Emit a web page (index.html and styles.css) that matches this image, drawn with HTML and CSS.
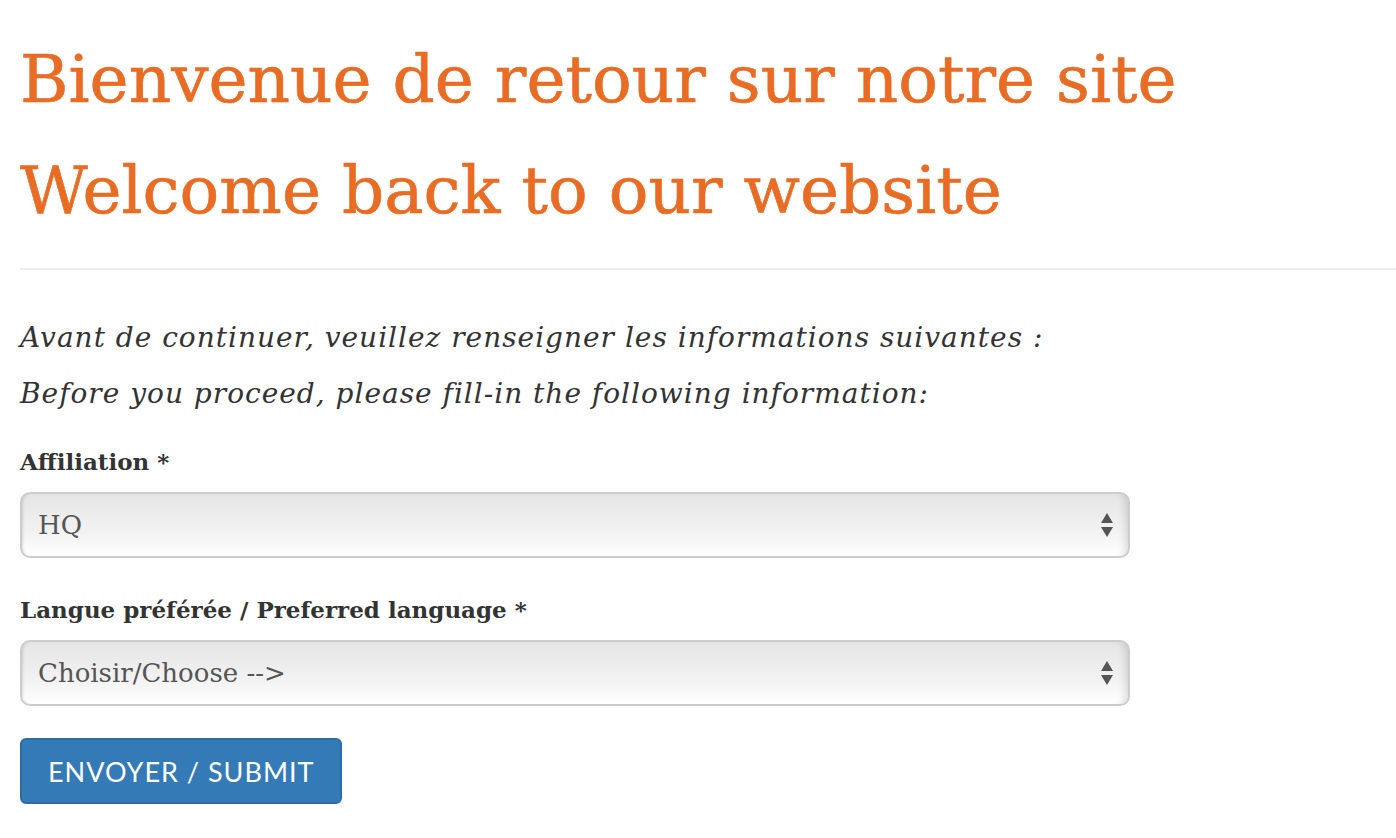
FILE: index.html
```html
<!DOCTYPE html>
<html lang="fr">
<head>
<meta charset="utf-8">
<title>Bienvenue</title>
<link rel="stylesheet" href="styles.css">
</head>
<body>
<div class="page">
  <h1 class="title"><span class="title-line">Bienvenue de retour sur notre site</span><span class="title-line">Welcome back to our website</span></h1>
  <hr class="rule">
  <form class="form">
    <div class="intro-block">
      <p class="intro">Avant de continuer, veuillez renseigner les informations suivantes :</p>
      <p class="intro">Before you proceed, please fill-in the following information:</p>
    </div>
    <div class="field">
      <label class="label">Affiliation *</label>
      <div class="select">
        <span class="select-value">HQ</span>
        <svg class="arrows" width="14" height="26" viewBox="0 0 14 26"><path d="M7 1 L13 11 L1 11 Z" fill="#555"/><path d="M1 15 L13 15 L7 25 Z" fill="#555"/></svg>
      </div>
    </div>
    <div class="field">
      <label class="label">Langue préférée / Preferred language *</label>
      <div class="select">
        <span class="select-value">Choisir/Choose --&gt;</span>
        <svg class="arrows" width="14" height="26" viewBox="0 0 14 26"><path d="M7 1 L13 11 L1 11 Z" fill="#555"/><path d="M1 15 L13 15 L7 25 Z" fill="#555"/></svg>
      </div>
    </div>
    <button class="submit" type="button">ENVOYER / SUBMIT</button>
  </form>
</div>
</body>
</html>
```

FILE: styles.css
```css
html, body {
  margin: 0;
  padding: 0;
  background: #fff;
}
body {
  font-family: "DejaVu Serif", "Liberation Serif", serif;
  color: #333;
}
.page {
  padding: 0 0 0 20px;
}
.title {
  margin: 0;
  padding-top: 24px;
  font-weight: normal;
  color: #e96c24;
  font-size: 66px;
  -webkit-text-stroke: 0.6px #e96c24;
}
.title-line {
  display: block;
  line-height: 111px;
}
.rule {
  margin: 22px 0 0 0;
  border: 0;
  border-top: 2px solid #eee;
}
.form {
  width: 1110px;
  padding-top: 48px;
}
.intro-block {
  display: flex;
  flex-direction: column;
  gap: 16px;
}
.intro {
  margin: 0;
  font-style: italic;
  font-size: 28px;
  line-height: 40px;
  letter-spacing: 1px;
}
.field {
  margin-top: 34px;
}
.intro-block + .field {
  margin-top: 30px;
}
.label {
  display: block;
  font-weight: bold;
  font-size: 23px;
  line-height: 36px;
  margin-bottom: 12px;
}
.select {
  box-sizing: border-box;
  height: 66px;
  border: 2px solid #ccc;
  border-radius: 10px;
  background: linear-gradient(#e5e5e5, #f2f2f2 60%, #fff);
  box-shadow: inset 3px 0 3px -2px rgba(0,0,0,0.12), inset -10px 0 8px -8px rgba(0,0,0,0.15);
  display: flex;
  align-items: center;
  justify-content: space-between;
  padding: 0 14px 0 16px;
}
.select-value {
  font-size: 26px;
  color: #555;
}
.arrows {
  display: block;
}
.submit {
  display: block;
  margin-top: 32px;
  height: 66px;
  padding: 0 26px;
  background: #337ab7;
  border: 2px solid #2e6da4;
  border-radius: 6px;
  color: #fff;
  font-family: "Lato", "DejaVu Sans", sans-serif;
  font-size: 27px;
  letter-spacing: 1px;
}
```
